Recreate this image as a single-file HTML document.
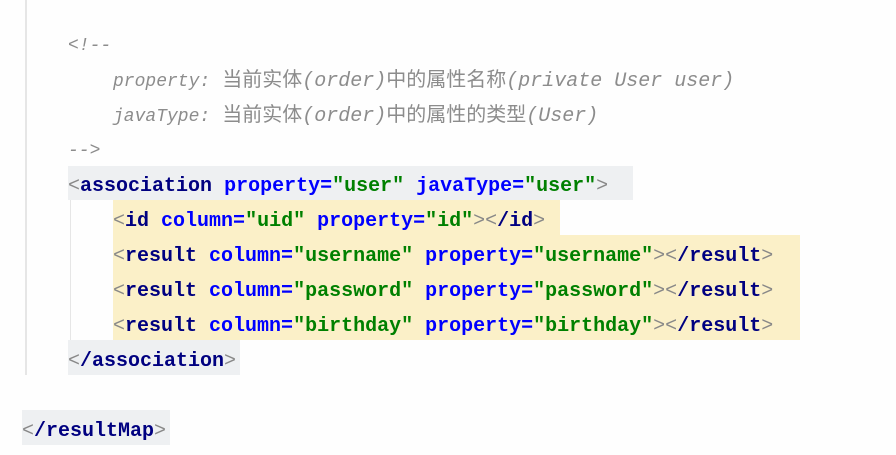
<!DOCTYPE html>
<html><head><meta charset="utf-8"><style>
body{margin:0;width:896px;height:455px;background:#fefefe;overflow:hidden;position:relative;font-family:"Liberation Mono","Noto Sans CJK SC",monospace;}
.l{position:absolute;white-space:pre;font-size:20px;font-weight:bold;line-height:35px;height:35px;}
.c{position:absolute;white-space:pre;font-size:18px;font-style:italic;color:#8c8c8c;line-height:35px;font-weight:normal;}
.c .z{font-style:normal;font-size:20px;}
.c .w{font-size:20px;}
.t{color:#000080}.a{color:#0000ff}.v{color:#008000}.b{color:#888;font-weight:normal}
.bg{position:absolute;}
</style></head><body>
<div class="bg" style="left:25px;top:0;width:2px;height:375px;background:#e6e6e6"></div>
<div class="bg" style="left:70px;top:200px;width:1px;height:140px;background:#e6e6e6"></div>
<div class="bg" style="left:68px;top:166px;width:565px;height:34px;background:#eef0f2"></div>
<div class="bg" style="left:113px;top:200px;width:447px;height:35px;background:#fbf0c8"></div>
<div class="bg" style="left:113px;top:235px;width:687px;height:105px;background:#fbf0c8"></div>
<div class="bg" style="left:68px;top:340px;width:172px;height:35px;background:#eef0f2"></div>
<div class="bg" style="left:22px;top:410px;width:148px;height:35px;background:#eef0f2"></div>

<div class="c" style="left:68px;top:29px">&lt;!--</div>
<div class="c" style="left:113px;top:64px">property:<span class="z"> 当前实体</span><span class="w">(order)</span><span class="z">中的属性名称</span><span class="w">(private User user)</span></div>
<div class="c" style="left:113px;top:99px">javaType:<span class="z"> 当前实体</span><span class="w">(order)</span><span class="z">中的属性的类型</span><span class="w">(User)</span></div>
<div class="c" style="left:68px;top:134px">--&gt;</div>

<div class="l" style="left:68px;top:169px"><span class="b">&lt;</span><span class="t">association</span> <span class="a">property=</span><span class="v">"user"</span> <span class="a">javaType=</span><span class="v">"user"</span><span class="b">&gt;</span></div>
<div class="l" style="left:113px;top:204px"><span class="b">&lt;</span><span class="t">id</span> <span class="a">column=</span><span class="v">"uid"</span> <span class="a">property=</span><span class="v">"id"</span><span class="b">&gt;&lt;</span><span class="t">/id</span><span class="b">&gt;</span></div>
<div class="l" style="left:113px;top:239px"><span class="b">&lt;</span><span class="t">result</span> <span class="a">column=</span><span class="v">"username"</span> <span class="a">property=</span><span class="v">"username"</span><span class="b">&gt;&lt;</span><span class="t">/result</span><span class="b">&gt;</span></div>
<div class="l" style="left:113px;top:274px"><span class="b">&lt;</span><span class="t">result</span> <span class="a">column=</span><span class="v">"password"</span> <span class="a">property=</span><span class="v">"password"</span><span class="b">&gt;&lt;</span><span class="t">/result</span><span class="b">&gt;</span></div>
<div class="l" style="left:113px;top:309px"><span class="b">&lt;</span><span class="t">result</span> <span class="a">column=</span><span class="v">"birthday"</span> <span class="a">property=</span><span class="v">"birthday"</span><span class="b">&gt;&lt;</span><span class="t">/result</span><span class="b">&gt;</span></div>
<div class="l" style="left:68px;top:344px"><span class="b">&lt;</span><span class="t">/association</span><span class="b">&gt;</span></div>
<div class="l" style="left:22px;top:414px"><span class="b">&lt;</span><span class="t">/resultMap</span><span class="b">&gt;</span></div>
</body></html>
